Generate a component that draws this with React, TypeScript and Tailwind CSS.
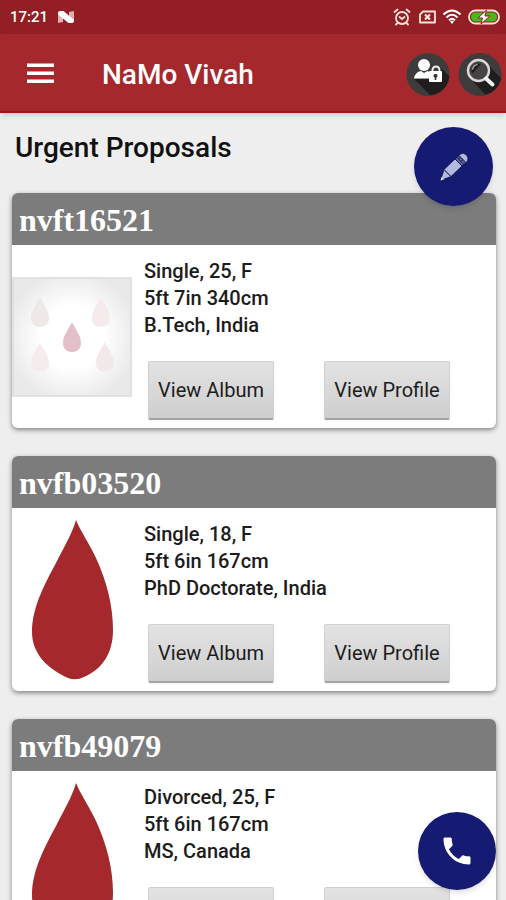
import { useId } from "react";

type Profile = {
  id: string;
  summary: string;
  height: string;
  education: string;
  hasPhoto: boolean;
};

const PROFILES: Profile[] = [
  { id: "nvft16521", summary: "Single, 25, F", height: "5ft 7in 340cm", education: "B.Tech, India", hasPhoto: false },
  { id: "nvfb03520", summary: "Single, 18, F", height: "5ft 6in 167cm", education: "PhD Doctorate, India", hasPhoto: true },
  { id: "nvfb49079", summary: "Divorced, 25, F", height: "5ft 6in 167cm", education: "MS, Canada", hasPhoto: true },
];

const SMALL_DROP = "M0-15C3-8 9-2 9 6C9 12 5 15 0 15C-5 15-9 12-9 6C-9-2-3-8 0-15Z";

function StatusBar() {
  return (
    <div className="flex h-[34px] items-center justify-between bg-[#931e23] pr-1.5 pl-2.5 text-white">
      <div className="flex items-center gap-2.5">
        <span className="text-[15px] leading-5 font-medium">17:21</span>
        <svg className="h-4 w-4" viewBox="0 0 16 16">
          <path d="M0 4L5 7V13L0 14ZM11 3L16 2V12L11 9Z" fill="#e0aeb1" />
          <path d="M0 4Q0 2 2 2H5.500L16 11V12Q16 14 14 14H10.500L0 5.500Z" fill="#fff" />
        </svg>
      </div>
      <div className="flex items-center gap-[7px]">
        <svg className="h-[18px] w-[18px]" viewBox="0 0 18 18" fill="none" stroke="#fbe3dc" strokeWidth="1.8" strokeLinecap="round">
          <circle cx="9" cy="10" r="6" />
          <path d="M6.500 9L9 11L11.500 9M1.500 4L4.500 1.500M16.500 4L13.500 1.500M4.500 15L3 16.500M13.500 15L15 16.500" />
        </svg>
        <svg className="h-[18px] w-[18px]" viewBox="0 0 18 18" fill="none" stroke="#fbe3dc" strokeWidth="1.8">
          <path d="M5 3.500H17V14.500H2V6.500Z" strokeLinejoin="round" />
          <path d="M7 6.500L12 11.500M12 6.500L7 11.500" strokeWidth="2.200" />
        </svg>
        <svg className="h-[18px] w-[18px]" viewBox="0 0 18 18" fill="none" stroke="#fff" strokeWidth="2">
          <path d="M0.500 6.500Q9-1.500 17.500 6.500M3.500 9.500Q9 4 14.500 9.500M6 12.300Q9 9.500 12 12.300" />
          <path d="M7 13.500Q9 12 11 13.500L9 16Z" fill="#fff" stroke="none" />
        </svg>
        <svg className="h-[18px] w-8" viewBox="0 0 32 18">
          <rect x="1" y="2.500" width="30" height="13" rx="6.500" fill="none" stroke="#fbe3dc" strokeWidth="1.800" />
          <rect x="3" y="4.500" width="26" height="9" rx="4.500" fill="#4fb51c" />
          <path d="M18.500 2L10 10H14.500L13 16L22 8H17Z" fill="#fff" stroke="#931e23" strokeWidth="1" />
        </svg>
      </div>
    </div>
  );
}

function AppBar() {
  const clip = useId();

  return (
    <header className="relative z-10 flex h-[79px] items-center border-b-2 border-[#98181d] bg-[#a5282c] pt-1 pr-1 pl-[27px] shadow-md">
      <button type="button" aria-label="Menu" className="mr-12">
        <svg className="h-[27px] w-[27px]" viewBox="0 0 27 27" fill="#fff">
          <path d="M0 2.500H27V6H0ZM0 10.500H27V14H0ZM0 18.500H27V22H0Z" />
        </svg>
      </button>
      <h1 className="flex-1 text-[28px] leading-9 font-medium text-white">NaMo Vivah</h1>
      <div className="flex gap-2">
        <button type="button" aria-label="Account privacy">
          <svg className="h-11 w-11" viewBox="0 0 44 44">
            <clipPath id={`${clip}a`}>
              <circle cx="22" cy="21" r="21.500" />
            </clipPath>
            <circle cx="22" cy="21.500" r="21.500" fill="#3d3b3c" />
            <g clipPath={`url(#${clip}a)`}>
              <path d="M35 15L56 36V52H34L8 26L22 26Z" fill="#1f1d1e" />
            </g>
            <circle cx="18" cy="12" r="6" fill="#fff" />
            <path d="M8 25.500Q9 19 15 18L18 20L21.500 18L24 19.500V25.500Z" fill="#fff" />
            <path d="M26.500 18.500V17A3.500 3.500 0 0 1 33.500 17V18.500" fill="none" stroke="#eee" strokeWidth="2" />
            <rect x="23" y="18" width="13" height="11" rx="1" fill="#fff" />
            <path d="M29.500 21A1.800 1.800 0 0 1 30.300 24.500V27H28.700V24.500A1.800 1.800 0 0 1 29.500 21Z" fill="#333" />
          </svg>
        </button>
        <button type="button" aria-label="Search">
          <svg className="h-11 w-11" viewBox="0 0 44 44">
            <clipPath id={`${clip}b`}>
              <circle cx="22" cy="21" r="21.500" />
            </clipPath>
            <circle cx="22" cy="21.500" r="21.500" fill="#3d3b3c" />
            <g clipPath={`url(#${clip}b)`}>
              <path d="M30 12L52 34V56H40L14 27L20 29Z" fill="#1f1d1e" />
            </g>
            <circle cx="20.500" cy="17.500" r="10.500" fill="#454344" stroke="#d9d9d9" strokeWidth="2.400" />
            <path d="M13.500 18.500A7.500 7.500 0 0 1 23 11L14.500 20.500Z" fill="#1d1b1c" />
            <path d="M14.500 16.500A6.500 6.500 0 0 1 19.500 11.500" fill="none" stroke="#ccc" strokeWidth="1.200" />
            <path d="M28 25.500L34.500 31.500" stroke="#f0f0f0" strokeWidth="4" strokeLinecap="round" />
          </svg>
        </button>
      </div>
    </header>
  );
}

function PlaceholderPhoto() {
  const glow = useId();

  return (
    <svg className="h-[120px] w-[120px]" viewBox="0 0 120 120">
      <defs>
        <radialGradient id={glow} cx="0.500" cy="0.500" r="0.580">
          <stop offset="0.450" stopColor="#fff" />
          <stop offset="0.950" stopColor="#e9e9e9" />
        </radialGradient>
      </defs>
      <rect width="120" height="120" fill={`url(#${glow})`} />
      <rect x="1" y="1" width="118" height="118" fill="none" stroke="#e1e1e1" strokeWidth="2" />
      <path d={SMALL_DROP} transform="translate(28 35)" fill="#efe8e8" />
      <path d={SMALL_DROP} transform="translate(89 35)" fill="#f5ebec" />
      <path d={SMALL_DROP} transform="translate(28 80)" fill="#f6ecee" />
      <path d={SMALL_DROP} transform="translate(93 80)" fill="#f3e9ea" />
      <path d={SMALL_DROP} transform="translate(60 60)" fill="#e3c0c8" />
    </svg>
  );
}

function BloodDrop() {
  return (
    <svg className="h-40 w-[120px]" viewBox="0 0 120 160">
      <path d="M64 0C69 12 77 23 84 38C95 62 101 86 101 110C101 134 90 149 72 157Q64 161 56 158C36 149 20 134 20 112C20 86 34 62 45 41C52 27 60 14 64 0Z" fill="#a5282c" />
    </svg>
  );
}

function CardButton({ label }: { label: string }) {
  return (
    <button
      type="button"
      className="h-[59px] w-[126px] rounded-xs border border-b-2 border-[#d0d0d0] border-b-[#a3a3a3] bg-linear-to-b from-[#e3e3e3] to-[#cecece] text-xl text-[#1c1c1c] shadow-xs"
    >
      {label}
    </button>
  );
}

function ProfileCard({ profile }: { profile: Profile }) {
  return (
    <article className="shrink-0 overflow-hidden rounded-md bg-white shadow-[0_2px_5px_rgba(0,0,0,0.45)]">
      <h3 className="h-[52px] bg-[#7c7c7c] px-[7px] font-['Liberation_Serif',serif] text-[32px] leading-[54px] font-bold text-white">
        {profile.id}
      </h3>
      <div className="flex items-center gap-3">
        {profile.hasPhoto ? <BloodDrop /> : <PlaceholderPhoto />}
        <div className="flex-1 pt-[13px] pb-2">
          <div className="text-xl leading-[27px] font-medium text-[#1c1c1c]">
            <p>{profile.summary}</p>
            <p>{profile.height}</p>
            <p>{profile.education}</p>
          </div>
          <div className="mt-[22px] flex gap-[50px] pl-1">
            <CardButton label="View Album" />
            <CardButton label="View Profile" />
          </div>
        </div>
      </div>
    </article>
  );
}

export default function App() {
  return (
    <div className="relative flex h-screen flex-col overflow-hidden bg-[#eeeeee] font-[Roboto,sans-serif]">
      <StatusBar />
      <AppBar />
      <main className="relative flex-1 overflow-y-auto [scrollbar-width:none]">
        <h2 className="px-[15px] pt-[17px] pb-[27px] text-[28px] leading-9 font-medium text-[#111]">Urgent Proposals</h2>
        <div className="flex flex-col gap-7 pr-2.5 pb-7 pl-3">
          {PROFILES.map((profile) => (
            <ProfileCard key={profile.id} profile={profile} />
          ))}
        </div>
        <button
          type="button"
          aria-label="Edit"
          className="absolute top-3.5 right-[13px] flex h-[79px] w-[79px] items-center justify-center rounded-full bg-[#151a73] shadow-md"
        >
          <svg className="h-8 w-8" viewBox="0 0 32 32" fill="#b3badf" stroke="#0b0f45" strokeWidth="0.8" strokeLinejoin="round">
            <path d="M2.500 29.500L6 18.500L13 25.500Z" />
            <path d="M6 18.500L17 8L24 15L13 25.500Z" />
            <path d="M17 8L21 4.500L28 11.500L24 15Z" fill="#5d669f" />
            <path d="M19 6.500L26 13.500M20.500 8L22.500 6M23 10.500L25 8.500" fill="none" />
            <path d="M21 4.500L22.500 3Q25.500 1 28.500 4Q31 7 29.500 10L28 11.500Z" />
            <path d="M2.500 29.500L3.500 26L6 28.500Z" fill="#dfe3f5" stroke="none" />
          </svg>
        </button>
      </main>
      <button
        type="button"
        aria-label="Call"
        className="absolute right-2.5 bottom-2.5 z-10 flex h-[78px] w-[78px] items-center justify-center rounded-full bg-[#151a73] shadow-md"
      >
        <svg className="h-9 w-9" viewBox="0 0 24 24" fill="#fff">
          <path d="M6.620 10.790c1.440 2.830 3.760 5.140 6.590 6.590l2.200-2.200c.27-.27.670-.36 1.020-.24 1.120.37 2.330.57 3.570.57.550 0 1 .45 1 1V20c0 .55-.45 1-1 1-9.390 0-17-7.610-17-17 0-.55.450-1 1-1h3.500c.55 0 1 .45 1 1 0 1.250.2 2.450.57 3.570.11.350.03.740-.25 1.020l-2.200 2.200z" />
        </svg>
      </button>
    </div>
  );
}
